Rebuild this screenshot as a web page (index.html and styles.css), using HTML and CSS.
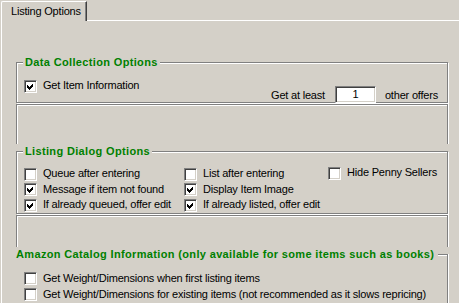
FILE: index.html
```html
<!DOCTYPE html>
<html lang="en">
<head>
    <meta charset="UTF-8">
    <meta name="viewport" content="width=device-width, initial-scale=1.0">
    <title>Listing Options</title>
    <link rel="stylesheet" href="styles.css">
</head>
<body>
    <div class="tab-strip">
        <div class="tab">Listing Options</div>
        <div class="tab-rest"></div>
    </div>

    <div class="page">
        <!-- Data collection -->
        <div class="group">
            <div class="frame frame-data">
                <div class="group-title">Data Collection Options</div>
                <div class="data-row">
                    <div class="check-row">
                        <span class="checkbox checked"><svg width="9" height="9" viewBox="0 0 9 9"><polygon points="1,3 3,5 7,1 7,4 3,8 1,6"/></svg></span>
                        Get Item Information
                    </div>
                    <div class="offers">
                        <span>Get at least</span>
                        <span class="textbox">1</span>
                        <span>other offers</span>
                    </div>
                </div>
            </div>
        </div>

        <div class="frame-empty frame-empty-1"></div>

        <!-- Listing dialog -->
        <div class="group">
            <div class="frame frame-listing">
                <div class="group-title">Listing Dialog Options</div>
                <div class="listing-grid">
                    <div class="check-row"><span class="checkbox"></span>Queue after entering</div>
                    <div class="check-row"><span class="checkbox"></span>List after entering</div>
                    <div class="check-row check-row-up"><span class="checkbox"></span>Hide Penny Sellers</div>

                    <div class="check-row"><span class="checkbox checked"><svg width="9" height="9" viewBox="0 0 9 9"><polygon points="1,3 3,5 7,1 7,4 3,8 1,6"/></svg></span>Message if item not found</div>
                    <div class="check-row"><span class="checkbox checked"><svg width="9" height="9" viewBox="0 0 9 9"><polygon points="1,3 3,5 7,1 7,4 3,8 1,6"/></svg></span>Display Item Image</div>
                    <div></div>

                    <div class="check-row"><span class="checkbox checked"><svg width="9" height="9" viewBox="0 0 9 9"><polygon points="1,3 3,5 7,1 7,4 3,8 1,6"/></svg></span>If already queued, offer edit</div>
                    <div class="check-row"><span class="checkbox checked"><svg width="9" height="9" viewBox="0 0 9 9"><polygon points="1,3 3,5 7,1 7,4 3,8 1,6"/></svg></span>If already listed, offer edit</div>
                    <div></div>
                </div>
            </div>
        </div>

        <div class="frame-empty frame-empty-2"></div>

        <!-- Amazon catalog -->
        <div class="group">
            <div class="frame frame-amazon">
                <div class="group-title group-title-wide">Amazon Catalog Information (only available for some items such as books)</div>
                <div class="amazon-list">
                    <div class="check-row"><span class="checkbox"></span>Get Weight/Dimensions when first listing items</div>
                    <div class="check-row"><span class="checkbox"></span>Get Weight/Dimensions for existing items (not recommended as it slows repricing)</div>
                </div>
            </div>
        </div>
    </div>
</body>
</html>
```

FILE: styles.css
```css
html, body {
    margin: 0;
    padding: 0;
    height: 100%;
    overflow: hidden;
}

body {
    background-color: #d4d0c8;
    color: #000000;
    font-family: "Liberation Sans", Arial, sans-serif;
    font-size: 11px;
    letter-spacing: -0.2px;
}

/* Tab header */
.tab-strip {
    display: flex;
    height: 21px;
}

.tab {
    box-sizing: border-box;
    width: 86px;
    height: 20px;
    margin-top: 1px;
    margin-left: 1px;
    padding-left: 9px;
    border-top: 1px solid #ffffff;
    border-left: 1px solid #ffffff;
    border-right: 1px solid #404040;
    border-top-left-radius: 2px;
    box-shadow: inset -1px 0 0 #808080;
    line-height: 19px;
    white-space: nowrap;
}

.tab-rest {
    flex: 1;
    border-bottom: 1px solid #ffffff;
}

/* Page body */
.page {
    box-sizing: border-box;
    height: calc(100% - 21px);
    margin-left: 1px;
    border-left: 1px solid #ffffff;
    padding: 34px 11px 0 14px;
}

.group {
    background-color: #d4d0c8;
    padding-top: 7px;
}

.frame {
    box-sizing: border-box;
    border: 1px solid #808080;
    box-shadow: 1px 1px 0 #ffffff, inset 1px 1px 0 #ffffff;
}

.group-title {
    display: inline-block;
    margin: -7px 0 0 6px;
    padding: 0 2px;
    line-height: 13px;
    background-color: #d4d0c8;
    color: #008000;
    font-weight: bold;
    letter-spacing: 0.35px;
    white-space: nowrap;
    vertical-align: top;
}

.frame-data {
    height: 41px;
}

.data-row {
    display: flex;
    justify-content: space-between;
    align-items: flex-start;
    margin-top: 4px;
    padding: 0 9px 0 7px;
}

.offers {
    display: flex;
    align-items: center;
    gap: 10px;
    margin-top: 7px;
}

.textbox {
    box-sizing: border-box;
    width: 41px;
    height: 17px;
    margin-right: -1px;
    background-color: #ffffff;
    border-top: 1px solid #808080;
    border-left: 1px solid #808080;
    border-bottom: 1px solid #ffffff;
    border-right: 1px solid #ffffff;
    box-shadow: inset 1px 1px 0 #404040, inset -1px -1px 0 #d4d0c8;
    text-align: center;
    line-height: 15px;
}

.frame-empty {
    box-sizing: border-box;
    margin-top: 1px;
    border: 1px solid #808080;
    border-bottom: none;
    box-shadow: 1px 0 0 #ffffff, inset 1px 1px 0 #ffffff;
}

.frame-empty-1 {
    height: 40px;
}

.frame-empty-2 {
    height: 32px;
}

.frame-listing {
    height: 63px;
}

.listing-grid {
    display: grid;
    grid-template-columns: 160px 144px auto;
    grid-auto-rows: 15.5px;
    margin-top: 2px;
    padding-left: 7px;
}

.check-row {
    display: flex;
    align-items: center;
    height: 13px;
    line-height: 13px;
    white-space: nowrap;
}

.listing-grid .check-row,
.amazon-list .check-row {
    height: 100%;
}

.check-row-up {
    margin-top: -1px;
}

.checkbox {
    box-sizing: border-box;
    flex: none;
    width: 13px;
    height: 13px;
    margin: 1px 6px 0 0;
    padding: 2px;
    background-color: #ffffff;
    border-top: 1px solid #808080;
    border-left: 1px solid #808080;
    border-bottom: 1px solid #ffffff;
    border-right: 1px solid #ffffff;
    box-shadow: inset 1px 1px 0 #404040, inset -1px -1px 0 #d4d0c8;
}

.checkbox svg {
    display: block;
    margin: -1px 0 0 -1px;
    fill: #000000;
    shape-rendering: crispEdges;
}

.frame-amazon {
    height: 49px;
    border-left: none;
    border-bottom: none;
    box-shadow: 1px 0 0 #ffffff, inset 0 1px 0 #ffffff;
}

.group-title-wide {
    margin-left: 0;
    padding: 0 4px 0 0;
}

.amazon-list {
    display: grid;
    grid-auto-rows: 16px;
    margin-top: 3px;
    padding-left: 8px;
}
```
